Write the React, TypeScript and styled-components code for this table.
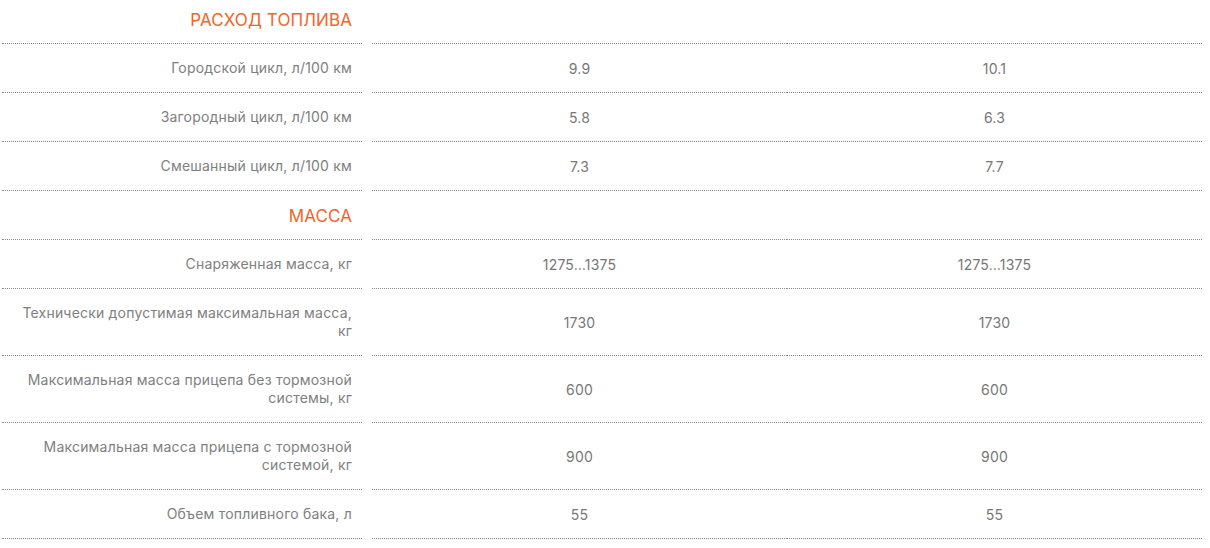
import React from "react";
import styled, { createGlobalStyle } from "styled-components";

const Global = createGlobalStyle`
  html, body { margin: 0; padding: 0; background: #fff; }
  body { font-family: Inter, Roboto, "Noto Sans", sans-serif; }
`;

const Table = styled.div`
  display: grid;
  grid-template-columns: 370px 415px 415px;
  padding-left: 2px;
  width: 1200px;
`;

const LabelCell = styled.div<{ $h: number }>`
  height: ${(p) => p.$h}px;
  box-sizing: border-box;
  border-bottom: 1px dotted #8a8a8a;
  margin-right: 10px;
  padding-right: 10px;
  display: flex;
  align-items: center;
  justify-content: flex-end;
  text-align: right;
  font-size: 14px;
  line-height: 18px;
  letter-spacing: 0.2px;
  color: #808080;
`;

const LabelText = styled.span`
  max-width: 336px;
`;

const HeaderCell = styled(LabelCell)<{ $top: number }>`
  font-size: 17px;
  letter-spacing: 0.1px;
  color: #f2652a;
  align-items: flex-start;
  padding-top: ${(p) => p.$top}px;
`;

const ValueCell = styled.div<{ $h: number }>`
  height: ${(p) => p.$h}px;
  box-sizing: border-box;
  border-bottom: 1px dotted #8a8a8a;
  display: flex;
  align-items: center;
  justify-content: center;
  font-size: 14px;
  letter-spacing: 0.2px;
  color: #777;
`;

type Row =
  | { kind: "header"; title: string; h: number; top: number }
  | { kind: "row"; label: string; a: string; b: string; h: number };

const rows: Row[] = [
  { kind: "header", title: "РАСХОД ТОПЛИВА", h: 44, top: 11 },
  { kind: "row", label: "Городской цикл, л/100 км", a: "9.9", b: "10.1", h: 49 },
  { kind: "row", label: "Загородный цикл, л/100 км", a: "5.8", b: "6.3", h: 49 },
  { kind: "row", label: "Смешанный цикл, л/100 км", a: "7.3", b: "7.7", h: 49 },
  { kind: "header", title: "МАССА", h: 49, top: 16 },
  { kind: "row", label: "Снаряженная масса, кг", a: "1275…1375", b: "1275…1375", h: 49 },
  { kind: "row", label: "Технически допустимая максимальная масса, кг", a: "1730", b: "1730", h: 67 },
  { kind: "row", label: "Максимальная масса прицепа без тормозной системы, кг", a: "600", b: "600", h: 67 },
  { kind: "row", label: "Максимальная масса прицепа с тормозной системой, кг", a: "900", b: "900", h: 67 },
  { kind: "row", label: "Объем топливного бака, л", a: "55", b: "55", h: 49 },
];

export default function App() {
  return (
    <>
      <Global />
      <Table>
        {rows.map((r, i) =>
          r.kind === "header" ? (
            <React.Fragment key={i}>
              <HeaderCell $h={r.h} $top={r.top}>{r.title}</HeaderCell>
              <ValueCell $h={r.h} />
              <ValueCell $h={r.h} />
            </React.Fragment>
          ) : (
            <React.Fragment key={i}>
              <LabelCell $h={r.h}>
                <LabelText>{r.label}</LabelText>
              </LabelCell>
              <ValueCell $h={r.h}>{r.a}</ValueCell>
              <ValueCell $h={r.h}>{r.b}</ValueCell>
            </React.Fragment>
          )
        )}
      </Table>
    </>
  );
}
